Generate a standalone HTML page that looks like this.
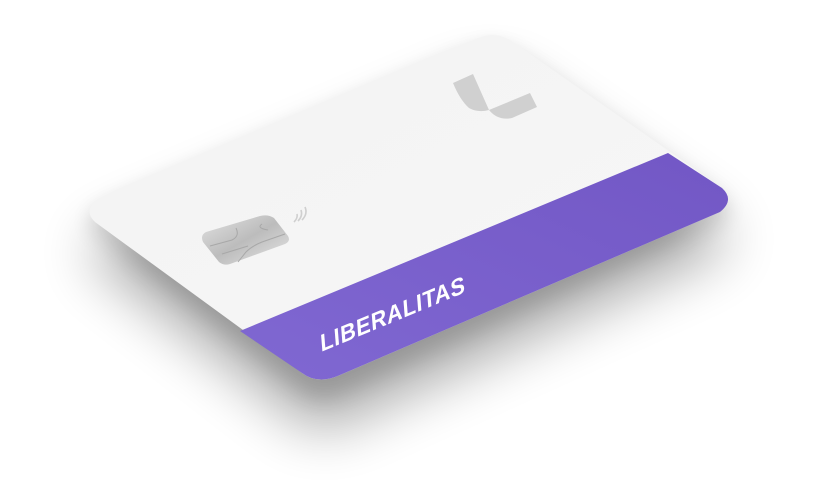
<!DOCTYPE html>
<html><head><style>
html,body{margin:0;padding:0;background:#fff;width:814px;height:504px;overflow:hidden}
</style></head><body>
<svg width="814" height="504" viewBox="0 0 814 504" xmlns="http://www.w3.org/2000/svg">
<defs>
<filter id="b1" x="-30%" y="-30%" width="160%" height="160%"><feGaussianBlur stdDeviation="28"/></filter>
<filter id="b2" x="-30%" y="-30%" width="160%" height="160%"><feGaussianBlur stdDeviation="10"/></filter>
<linearGradient id="pg" x1="0" y1="1" x2="1" y2="0"><stop offset="0" stop-color="#8068d2"/><stop offset="1" stop-color="#7257c5"/></linearGradient>
<linearGradient id="cg" x1="0" y1="0" x2="1" y2="1"><stop offset="0" stop-color="#f3f3f3"/><stop offset="1" stop-color="#f7f7f7"/></linearGradient>
<linearGradient id="chip" x1="0" y1="0" x2="1" y2="1"><stop offset="0" stop-color="#e2e2e2"/><stop offset=".5" stop-color="#bcbcbc"/><stop offset="1" stop-color="#e6e6e6"/></linearGradient>
</defs>
<path d="M100,238 L478,78 Q495,71 510,80 L722,228 Q735,240 720,252 L340,425 Q318,435 302,423 L95,262 Q82,250 100,238 Z" fill="#000" opacity=".32" filter="url(#b1)"/>
<path d="M100,208 L478,48 Q495,41 510,50 L722,198 Q735,210 720,222 L340,395 Q318,405 302,393 L95,232 Q82,220 100,208 Z" fill="#000" opacity=".13" filter="url(#b2)"/>
<path d="M100,198 L478,38 Q495,31 510,40 L722,188 Q735,200 720,212 L340,375 Q318,385 302,373 L95,222 Q82,210 100,198 Z" fill="url(#cg)"/>
<path d="M240,331 L668,153 L722,188 Q735,200 720,212 L340,375 Q318,385 302,373 Z" fill="url(#pg)"/>
<path d="M453,83 L473,74 L489,110 Q478,113 469,108 Q460,100 453,83 Z" fill="#d0d0d0"/>
<path d="M489,110 L530,93 L537,107 L512,118 Q498,121 489,110 Z" fill="#d0d0d0"/>
<path d="M206,232 L260,216 Q268,214 274,218 L288,236 Q291,241 285,244 L230,264 Q224,266 219,262 L203,242 Q200,235 206,232 Z" fill="url(#chip)"/>
<path d="M210,246 L232,240 Q240,236 236,228 M238,262 L246,252 Q252,246 262,242 L285,234 M222,254 L248,246 M262,224 Q256,228 268,230" stroke="#a8a8a8" stroke-width="1" fill="none"/>
<g stroke="#cfcfcf" stroke-width="1.6" fill="none">
<path d="M294,222 Q298,218 297,214"/><path d="M298,221 Q303,216 301,210"/><path d="M302,220 Q308,214 305,207"/></g>
<text x="0" y="0" transform="translate(321,352) rotate(-22.5) skewX(-18)" font-family="Liberation Sans, sans-serif" font-weight="bold" font-size="23" fill="#fff" letter-spacing="0.6">LIBERALITAS</text>
</svg>
</body></html>
